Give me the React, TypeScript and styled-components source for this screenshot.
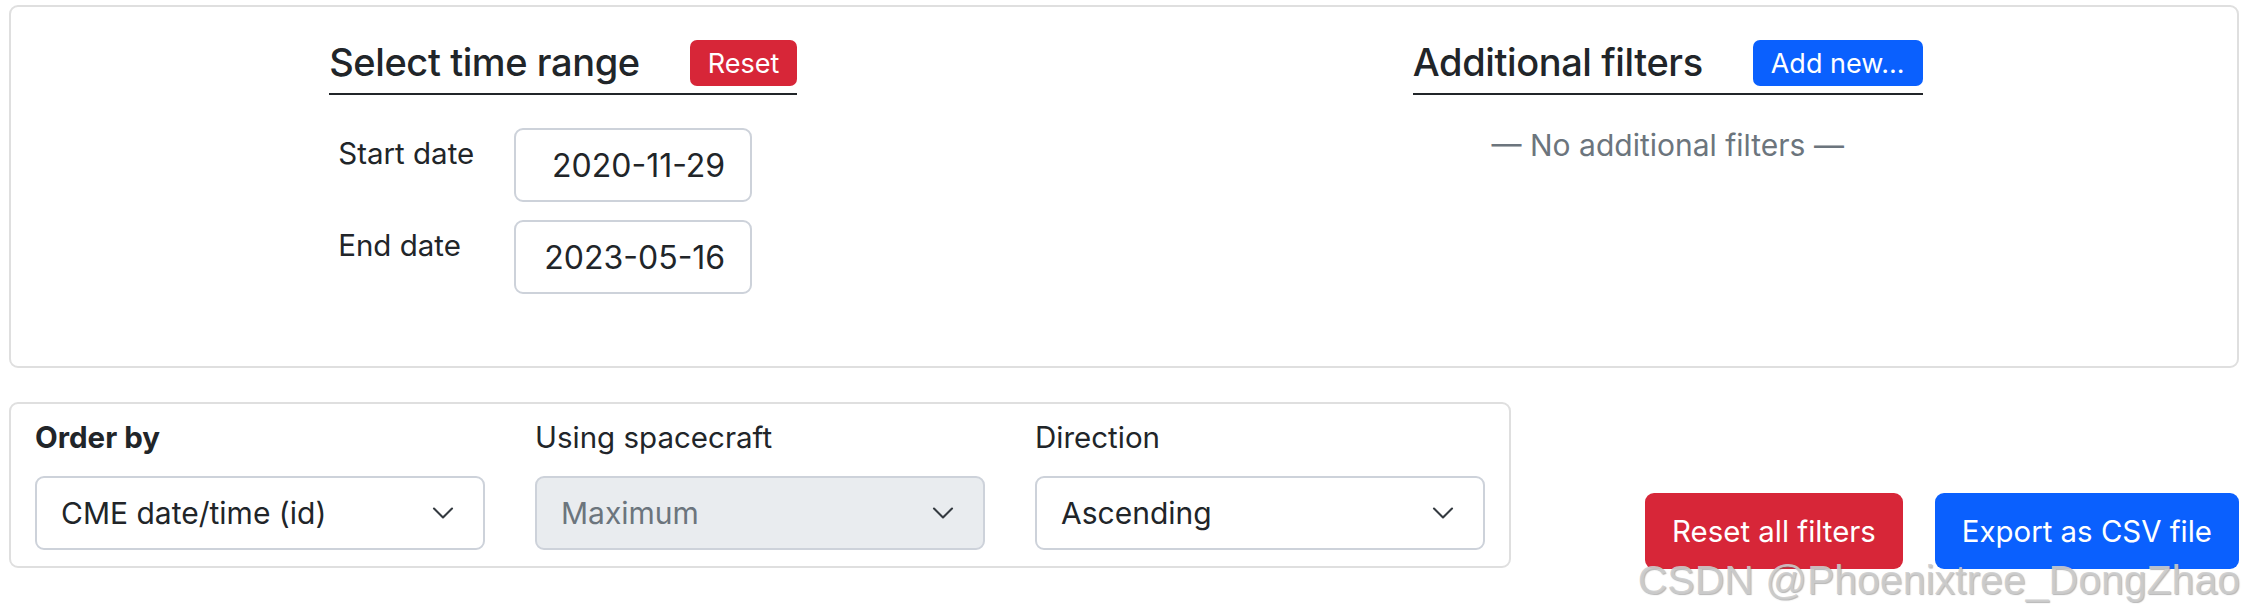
import React from 'react'
import styled, { createGlobalStyle } from 'styled-components'

const GlobalStyle = createGlobalStyle`
  html, body {
    margin: 0;
    padding: 0;
    background: #ffffff;
  }
  body {
    font-family: Inter, "Noto Sans", sans-serif;
    color: #212529;
  }
`

const Page = styled.div`
  position: relative;
  padding: 5px 9px 0 9px;
  height: 616px;
  box-sizing: border-box;
`

const FilterCard = styled.div`
  display: grid;
  grid-template-columns: 1fr 1fr;
  padding: 33px 17px 72px 0;
  border: 2px solid #dfdfdf;
  border-radius: 9px;
`

const Block = styled.div`
  justify-self: center;
  width: fit-content;
`

const HeadingRow = styled.div`
  display: flex;
  align-items: center;
  gap: 50px;
  padding-bottom: 7px;
  border-bottom: 2px solid #212529;
`

const Heading = styled.h4`
  margin: 0;
  font-size: 38px;
  font-weight: 500;
  line-height: 1.2;
  letter-spacing: -0.4px;
`

const SmallButton = styled.button<{ $variant: 'danger' | 'primary' }>`
  height: 46px;
  padding: 0 18px;
  border: none;
  border-radius: 7px;
  font-family: inherit;
  font-size: 27px;
  color: #ffffff;
  background: ${p => (p.$variant === 'danger' ? '#d72638' : '#0a60fe')};
`

const DateGrid = styled.div`
  display: grid;
  grid-template-columns: 176px 238px;
  row-gap: 18px;
  margin: 33px 0 0 9px;
`

const DateLabel = styled.div`
  font-size: 29.5px;
  line-height: 42px;
  padding-top: 4px;
`

const DateBox = styled.div`
  box-sizing: border-box;
  height: 74px;
  display: flex;
  align-items: center;
  justify-content: flex-end;
  padding-right: 25px;
  border: 2px solid #cdd2da;
  border-radius: 9px;
  font-size: 32px;
`

const EmptyNote = styled.div`
  margin-top: 28px;
  text-align: center;
  font-size: 30px;
  line-height: 45px;
  color: #6c757d;
`

const BottomRow = styled.div`
  display: flex;
  justify-content: space-between;
  align-items: flex-end;
  margin-top: 34px;
`

const OrderCard = styled.div`
  box-sizing: border-box;
  width: 1502px;
  display: grid;
  grid-template-columns: repeat(3, 1fr);
  column-gap: 50px;
  padding: 12px 24px 16px;
  border: 2px solid #dfdfdf;
  border-radius: 9px;
`

const FieldLabel = styled.div<{ $bold?: boolean }>`
  font-size: 29.5px;
  line-height: 42px;
  font-weight: ${p => (p.$bold ? 700 : 400)};
  margin-bottom: 18px;
`

const SelectBox = styled.div<{ $disabled?: boolean }>`
  box-sizing: border-box;
  height: 74px;
  display: flex;
  align-items: center;
  justify-content: space-between;
  padding: 0 28px 0 24px;
  border: 2px solid #cdd2da;
  border-radius: 9px;
  font-size: 30px;
  background: ${p => (p.$disabled ? '#e9ecef' : '#ffffff')};
  color: ${p => (p.$disabled ? '#6c757d' : '#212529')};
`

const Actions = styled.div`
  display: flex;
  gap: 32px;
  margin-bottom: -1px;
`

const ActionButton = styled.button<{ $variant: 'danger' | 'primary' }>`
  height: 76px;
  padding: 0 27px;
  border: none;
  border-radius: 9px;
  font-family: inherit;
  font-size: 29.4px;
  color: #ffffff;
  background: ${p => (p.$variant === 'danger' ? '#d72638' : '#0a60fe')};
`

const Watermark = styled.div`
  position: absolute;
  right: 8px;
  top: 560px;
  font-family: "Liberation Sans", Arial, sans-serif;
  font-size: 41px;
  line-height: 40px;
  color: rgba(205, 205, 205, 0.9);
  text-shadow: 1px 1px 1px rgba(110, 110, 110, 0.5);
  pointer-events: none;
  white-space: nowrap;
`

const Chevron = () => (
  <svg width="24" height="24" viewBox="0 0 16 16" fill="none">
    <path d="M2 5l6 6 6-6" stroke="#343a40" strokeWidth="1.4" strokeLinecap="round" strokeLinejoin="round" />
  </svg>
)

const selects = [
  { label: 'Order by', value: 'CME date/time (id)', bold: true, disabled: false },
  { label: 'Using spacecraft', value: 'Maximum', bold: false, disabled: true },
  { label: 'Direction', value: 'Ascending', bold: false, disabled: false },
]

export default function App() {
  return (
    <Page>
      <GlobalStyle />
      <FilterCard>
        <Block>
          <HeadingRow>
            <Heading>Select time range</Heading>
            <SmallButton $variant="danger">Reset</SmallButton>
          </HeadingRow>
          <DateGrid>
            <DateLabel>Start date</DateLabel>
            <DateBox>2020-11-29</DateBox>
            <DateLabel>End date</DateLabel>
            <DateBox>2023-05-16</DateBox>
          </DateGrid>
        </Block>
        <Block>
          <HeadingRow>
            <Heading>Additional filters</Heading>
            <SmallButton $variant="primary">Add new...</SmallButton>
          </HeadingRow>
          <EmptyNote>— No additional filters —</EmptyNote>
        </Block>
      </FilterCard>
      <BottomRow>
        <OrderCard>
          {selects.map(s => (
            <div key={s.label}>
              <FieldLabel $bold={s.bold}>{s.label}</FieldLabel>
              <SelectBox $disabled={s.disabled}>
                <span>{s.value}</span>
                <Chevron />
              </SelectBox>
            </div>
          ))}
        </OrderCard>
        <Actions>
          <ActionButton $variant="danger">Reset all filters</ActionButton>
          <ActionButton $variant="primary">Export as CSV file</ActionButton>
        </Actions>
      </BottomRow>
      <Watermark>CSDN @Phoenixtree_DongZhao</Watermark>
    </Page>
  )
}
